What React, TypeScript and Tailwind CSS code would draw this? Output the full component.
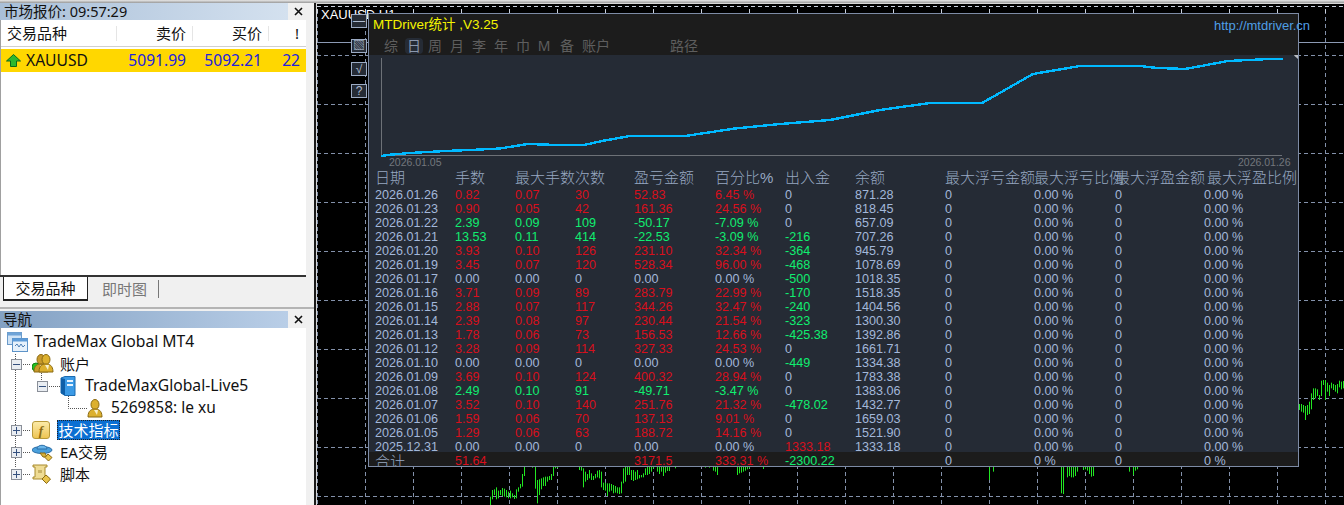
const cjk = "font-['Noto_Sans','Noto_Sans_CJK_SC',sans-serif]";
const arial = "font-['Liberation_Sans','Noto_Sans_CJK_SC',sans-serif]";

const header = ["日期", "手数", "最大手数", "次数", "盈亏金额", "百分比%", "出入金", "余额", "最大浮亏金额", "最大浮亏比例", "最大浮盈金额", "最大浮盈比例"];

const rows = [
  ["2026.01.26", "0.82", "0.07", "30", "52.83", "6.45 %", "0", "871.28"],
  ["2026.01.23", "0.90", "0.05", "42", "161.36", "24.56 %", "0", "818.45"],
  ["2026.01.22", "2.39", "0.09", "109", "-50.17", "-7.09 %", "0", "657.09"],
  ["2026.01.21", "13.53", "0.11", "414", "-22.53", "-3.09 %", "-216", "707.26"],
  ["2026.01.20", "3.93", "0.10", "126", "231.10", "32.34 %", "-364", "945.79"],
  ["2026.01.19", "3.45", "0.07", "120", "528.34", "96.00 %", "-468", "1078.69"],
  ["2026.01.17", "0.00", "0.00", "0", "0.00", "0.00 %", "-500", "1018.35"],
  ["2026.01.16", "3.71", "0.09", "89", "283.79", "22.99 %", "-170", "1518.35"],
  ["2026.01.15", "2.88", "0.07", "117", "344.26", "32.47 %", "-240", "1404.56"],
  ["2026.01.14", "2.39", "0.08", "97", "230.44", "21.54 %", "-323", "1300.30"],
  ["2026.01.13", "1.78", "0.06", "73", "156.53", "12.66 %", "-425.38", "1392.86"],
  ["2026.01.12", "3.28", "0.09", "114", "327.33", "24.53 %", "0", "1661.71"],
  ["2026.01.10", "0.00", "0.00", "0", "0.00", "0.00 %", "-449", "1334.38"],
  ["2026.01.09", "3.69", "0.10", "124", "400.32", "28.94 %", "0", "1783.38"],
  ["2026.01.08", "2.49", "0.10", "91", "-49.71", "-3.47 %", "0", "1383.06"],
  ["2026.01.07", "3.52", "0.10", "140", "251.76", "21.32 %", "-478.02", "1432.77"],
  ["2026.01.06", "1.59", "0.06", "70", "137.13", "9.01 %", "0", "1659.03"],
  ["2026.01.05", "1.29", "0.06", "63", "188.72", "14.16 %", "0", "1521.90"],
  ["2025.12.31", "0.00", "0.00", "0", "0.00", "0.00 %", "1333.18", "1333.18"],
];

const gridCols = "grid grid-cols-[80px_60px_60px_59px_81px_70px_70px_90px_89px_81px_89px_94px]";

function tone(value: string) {
  if (value.startsWith("-")) return "text-[#10ee70]";
  if (parseFloat(value) === 0) return "text-[#a3b8da]";
  return "text-[#d80f1c]";
}

// equity curve of the stats panel, in page coordinates
const curve = [
  [381, 156], [390, 154.7], [410, 153], [445, 151], [470, 150], [500, 148.5], [528, 144], [557, 145], [584, 145],
  [602, 141], [630, 136], [685, 136], [735, 128.5], [780, 124], [830, 120], [880, 110], [930, 103], [982, 103],
  [1033, 74], [1080, 66], [1140, 66], [1157, 68], [1173, 68.5], [1185, 69], [1228, 61], [1270, 59], [1283, 58.7],
];

// green bars behind the panel: x, top, bottom read off the chart
const barsA = [
  [30, 290, 315], [36, 270, 298], [42, 268, 285], [48, 262, 298], [54, 272, 295], [60, 270, 285], [66, 264, 288], [72, 266, 290], [78, 270, 292],
  [84, 275, 295], [90, 272, 295], [96, 280, 292], [102, 285, 297], [108, 268, 295], [114, 262, 275], [120, 252, 265], [126, 222, 260], [132, 199, 228],
  [155, 199, 203], [165, 199, 266], [172, 240, 310], [178, 238, 285], [184, 235, 268], [190, 232, 258], [196, 230, 258], [202, 230, 245], [208, 228, 240],
  [214, 222, 240], [220, 199, 228], [226, 199, 205], [232, 199, 204], [298, 199, 210], [304, 199, 212], [310, 205, 262], [316, 215, 245], [322, 222, 240],
  [328, 210, 235], [334, 220, 240], [340, 228, 240], [346, 222, 235], [352, 212, 232], [358, 210, 235], [364, 215, 262], [370, 248, 270], [376, 248, 272],
  [382, 250, 288], [388, 250, 275], [394, 252, 272], [400, 255, 280], [406, 258, 278], [412, 262, 280], [418, 262, 282], [424, 245, 280], [430, 205, 250],
  [436, 199, 245], [442, 199, 225], [448, 199, 225], [454, 210, 240], [460, 210, 243], [466, 215, 240], [472, 210, 238], [478, 225, 235], [484, 225, 232],
  [490, 220, 232], [496, 205, 225], [502, 199, 225], [508, 199, 222], [514, 199, 215], [520, 199, 206], [532, 199, 215], [538, 199, 222], [544, 199, 215],
  [550, 199, 228], [556, 199, 218], [562, 199, 213], [568, 199, 213], [586, 199, 205], [676, 199, 203], [688, 199, 203], [700, 199, 212], [706, 199, 215],
  [712, 199, 225], [772, 199, 225], [778, 199, 220], [784, 199, 218], [790, 199, 215], [796, 199, 212], [802, 199, 208], [808, 199, 205], [850, 199, 207],
];
const barsB = [
  [538, 199, 240], [550, 199, 215], [754, 199, 280], [760, 199, 282], [772, 199, 232], [778, 199, 228], [784, 199, 232], [790, 199, 232], [796, 199, 228],
  [802, 199, 215], [820, 199, 210], [826, 199, 208], [832, 199, 212], [838, 199, 222], [844, 199, 230], [850, 199, 228], [958, 199, 215], [970, 199, 225],
  [976, 199, 212], [982, 199, 208],
];
const barsC = [
  [28, 132, 150], [34, 132, 155], [40, 135, 158], [46, 138, 180], [52, 135, 165], [58, 125, 162], [64, 100, 148], [70, 85, 120], [76, 85, 115], [82, 88, 108],
  [88, 105, 120], [94, 62, 108], [100, 60, 75], [106, 60, 120], [112, 68, 95], [118, 75, 108], [124, 68, 85], [130, 72, 90], [136, 75, 95], [142, 72, 100],
  [148, 62, 82], [154, 65, 88], [160, 63, 85],
];

const vLines = Array.from({ length: 22 }, (_, i) => 317 + 48 * i);
const hLines = [55, 104, 153, 202, 251, 300, 349, 398, 447, 496];

function ChartCanvas() {
  const bars = [
    ...barsA.map(([x, a, b]) => [480 + x / 3, 400 + a / 3, 400 + b / 3]),
    ...barsB.map(([x, a, b]) => [810 + x / 3, 400 + a / 3, 400 + b / 3]),
    ...barsC.map(([x, a, b]) => [1290 + x / 3, 360 + a / 3, 360 + b / 3]),
  ];
  return (
    <svg className="absolute inset-0 h-full w-full" viewBox="316 3 1028 502">
      <rect x="316.5" y="3.5" width="1028" height="510" fill="none" stroke="#d8d8d8" />
      <line x1="317" x2="1344" y1="6.5" y2="6.5" stroke="#c9d0dc" strokeDasharray="4 3" />
      {hLines.map((y) => (
        <line key={y} x1="317" x2="1344" y1={y + 0.5} y2={y + 0.5} stroke="#8391aa" strokeDasharray="4 3" />
      ))}
      {vLines.map((x) => (
        <g key={x}>
          <line x1={x + 0.5} x2={x + 0.5} y1="10" y2="505" stroke="#8391aa" strokeDasharray="4 3" />
          <line x1={x + 0.5} x2={x + 0.5} y1="9" y2="13" stroke="#c9d0dc" />
        </g>
      ))}
      <line x1="317" x2="1344" y1="42.5" y2="42.5" stroke="#8c9ab4" />
      {bars.map(([x, a, b], i) => (
        <line key={i} x1={Math.round(x) + 0.5} x2={Math.round(x) + 0.5} y1={a} y2={b} stroke="#22e622" />
      ))}
    </svg>
  );
}

function StatsPlot() {
  return (
    <svg className="block shrink-0" width="929" height="115" viewBox="369 55 929 115">
      <rect x="369" y="55" width="929" height="115" fill="#252b35" />
      <line x1="381.5" x2="381.5" y1="58" y2="156" stroke="#6d7177" />
      <line x1="381" x2="1282" y1="155.5" y2="155.5" stroke="#6d7177" />
      <polyline points={curve.map((p) => p.join(",")).join(" ")} fill="none" stroke="#00b9ff" strokeWidth="2.4" shapeRendering="crispEdges" />
      <path d="M1294 55.5 L1298 52 V59 Z" fill="#b8bcc2" />
      <text x="389" y="166" fontFamily="Liberation Sans" fontSize="10.5" fill="#73777d">2026.01.05</text>
      <text x="1238" y="166" fontFamily="Liberation Sans" fontSize="10.5" fill="#73777d">2026.01.26</text>
    </svg>
  );
}

function StatsPanel() {
  const tabs = [
    ["综", "w-[20px] ml-[12px]"],
    ["日", "w-[18px] ml-[4px] bg-[#252b35] rounded-sm text-[#8b98ad]"],
    ["周", "w-[18px] ml-[3px]"],
    ["月", "w-[18px] ml-[4px]"],
    ["李", "w-[18px] ml-[4px]"],
    ["年", "w-[18px] ml-[4px]"],
    ["巾", "w-[18px] ml-[4px]"],
    ["M", "w-[18px] ml-[3px]"],
    ["备", "w-[18px] ml-[5px]"],
    ["账户", "w-[30px] ml-[5px]"],
    ["路径", "w-[30px] ml-[58px]"],
  ];
  return (
    <div className="absolute left-[52px] top-[10px] flex h-[454px] w-[931px] flex-col border border-[#7d8ba5] bg-[#252b35]">
      <div className="relative h-[41px] shrink-0 bg-[#1c1c1c]">
        <div className={`${arial} pl-[4px] pt-[2px] text-[13.5px] leading-[18px] text-[#f4f400]`}>MTDriver统计 ,V3.25</div>
        <div className={`${arial} absolute left-[845px] top-[4px] whitespace-nowrap text-[13px] leading-[16px] text-[#4f9fe6]`}>http://mtdriver.cn</div>
        <div className={`${cjk} mt-[4px] flex text-[14px] leading-[16px] text-[#5e5e5e]`}>
          {tabs.map(([label, cls]) => (
            <span key={label} className={`${cls} shrink-0 whitespace-nowrap text-center`}>
              {label}
            </span>
          ))}
        </div>
      </div>
      <StatsPlot />
      <div className={`${arial} min-h-0 flex-1 overflow-hidden text-[12.6px] text-[#a3b8da]`}>
        <div className={`${gridCols} h-[18px] whitespace-nowrap pl-[6px] text-[15px] font-light leading-[16px]`}>
          {header.map((h, i) => (
            <div key={h} className={`min-w-0 text-[#97a8c2] ${i === 11 ? "pl-[3px]" : ""}`}>
              {h}
            </div>
          ))}
        </div>
        {rows.map((row) => (
          <div key={row[0]} className={`${gridCols} h-[14px] pl-[6px] leading-[14px]`}>
            <div>{row[0]}</div>
            {row.slice(1, 6).map((cell, i) => (
              <div key={i} className={tone(row[4].startsWith("-") || parseFloat(row[4]) === 0 ? row[4] : "1")}>
                {cell}
              </div>
            ))}
            <div className={tone(row[6])}>{row[6]}</div>
            <div>{row[7]}</div>
            <div>0</div>
            <div>0.00 %</div>
            <div>0</div>
            <div>0.00 %</div>
          </div>
        ))}
        <div className={`${gridCols} relative -mt-[2px] h-[16px] bg-[#1c1c1c] pl-[6px] pt-[2px] leading-[15px]`}>
          <div className={`${cjk} text-[15px] font-light leading-[15px] text-[#97a8c2]`}>合计</div>
          <div className="text-[#d80f1c]">51.64</div>
          <div />
          <div />
          <div className="text-[#d80f1c]">3171.5</div>
          <div className="whitespace-nowrap text-[#d80f1c]">333.31 %</div>
          <div className="text-[#10ee70]">-2300.22</div>
          <div />
          <div>0</div>
          <div>0 %</div>
          <div>0</div>
          <div>0 %</div>
        </div>
      </div>
    </div>
  );
}

function SideButton({ label }: { label: string }) {
  return (
    <div className={`${arial} flex h-[14px] w-[16px] items-center justify-center border border-[#9cabc4] bg-[#252b35] text-[12px] leading-none text-[#aebbd0]`}>
      {label}
    </div>
  );
}

function CloseX() {
  return (
    <svg width="9" height="9" viewBox="0 0 9 9" className="shrink-0">
      <path d="M1 1 L8 8 M8 1 L1 8" stroke="#111" strokeWidth="1.6" />
    </svg>
  );
}

function UpArrow() {
  return (
    <svg width="15" height="13" viewBox="0 0 15 13">
      <path d="M7.5 0.5 L14.5 7 H10.5 V12.5 H4.5 V7 H0.5 Z" fill="#2eb82e" stroke="#0f6a1a" />
    </svg>
  );
}

function TerminalIcon() {
  return (
    <svg width="21" height="20" viewBox="0 0 21 20">
      <rect x="0.5" y="0.5" width="14" height="12" fill="#cfe3f6" stroke="#6b9ac9" />
      <rect x="0.5" y="0.5" width="14" height="3" fill="#6fa4d8" />
      <rect x="5.5" y="6.5" width="15" height="13" fill="#e6f1fb" stroke="#5d93c8" />
      <rect x="5.5" y="6.5" width="15" height="3" fill="#5d9bd8" />
      <path d="M8 14 l2 -2 l2 3 l2 -3 l2 3 l2 -2" fill="none" stroke="#4c7fb5" />
    </svg>
  );
}

function Person({ x = 0, color = "#dcb02e" }: { x?: number; color?: string }) {
  return (
    <g transform={`translate(${x} 0)`}>
      <ellipse cx="8" cy="5.5" rx="4" ry="5" fill={color} stroke="#8a6a12" />
      <path d="M1 18 C1 11 5 10 8 10 C11 10 15 11 15 18 Z" fill={color} stroke="#8a6a12" />
      <path d="M7 11 L10 16 L11 11 Z" fill="#f7f0cc" />
    </g>
  );
}

function AccountsIcon() {
  return (
    <svg width="22" height="20" viewBox="0 0 22 20">
      <circle cx="4" cy="13" r="4" fill="#22c122" stroke="#128012" />
      <Person x={1} color="#c99a2c" />
      <Person x={6} />
    </svg>
  );
}

function ServerIcon() {
  return (
    <svg width="16" height="20" viewBox="0 0 16 20">
      <path d="M1 2 L5 0.5 H15 V19.5 H5 L1 17 Z" fill="#3b9ae6" stroke="#1b6bb0" />
      <path d="M1 2 L5 3 V19.5 L1 17 Z" fill="#0f5fa8" />
      <rect x="7" y="4" width="6" height="2" fill="#e8f4ff" />
      <rect x="7" y="8" width="6" height="2" fill="#e8f4ff" />
    </svg>
  );
}

function FunctionIcon() {
  return (
    <div className="flex h-[18px] w-[18px] items-center justify-center rounded-[3px] border border-[#b89a3a] bg-gradient-to-b from-[#fbeaa6] to-[#eec552] font-['Liberation_Serif',serif] text-[13px] font-bold italic leading-none text-[#8a6a12]">
      f
    </div>
  );
}

function HatIcon() {
  return (
    <svg width="22" height="19" viewBox="0 0 22 19">
      <ellipse cx="10" cy="7" rx="10" ry="3.5" fill="#4aa0dc" stroke="#2a6ea8" />
      <path d="M5 6 C5 1 15 1 15 6 Z" fill="#6ab6ea" stroke="#2a6ea8" />
      <path d="M8 10 L13 10 L15 14 L11 14 Z" fill="#d8b23a" stroke="#8a6a12" />
      <path d="M16 11 L20 14.5 L16.5 18 L13 14.5 Z" fill="#e9c44c" stroke="#8a6a12" />
    </svg>
  );
}

function ScrollIcon() {
  return (
    <svg width="20" height="20" viewBox="0 0 20 20">
      <path d="M1 1 H15 V3 H13 V13 H15 V15 H1 V13 H3 V3 H1 Z" fill="#efdc94" stroke="#a88a2c" />
      <rect x="6" y="6" width="4" height="3" fill="#c9b266" />
      <path d="M14 11 L18.5 15 L14.5 19.5 L10 15 Z" fill="#e9c44c" stroke="#8a6a12" />
    </svg>
  );
}

function Toggle({ open }: { open: boolean }) {
  return (
    <svg width="11" height="11" viewBox="0 0 11 11" className="shrink-0">
      <rect x="0.5" y="0.5" width="10" height="10" fill="#e9edf2" stroke="#8a8f98" />
      <line x1="2" x2="9" y1="5.5" y2="5.5" stroke="#34507e" />
      {!open && <line x1="5.5" x2="5.5" y1="2" y2="9" stroke="#34507e" />}
    </svg>
  );
}

function TreeLines() {
  return (
    <svg className="absolute -left-px top-0" width="120" height="160" viewBox="0 328 120 160">
      <g stroke="#555" strokeDasharray="1 1" fill="none">
        <path d="M15.5 354 V468" />
        <path d="M21 364.5 H31 M21 430.5 H31 M21 452.5 H31 M21 474.5 H31" />
        <path d="M41.5 373 V381 M47 386.5 H60" />
        <path d="M68.5 396 V408.5 H87" />
      </g>
    </svg>
  );
}

function TreeRow({ children, pad }: { children: React.ReactNode; pad: string }) {
  return <div className={`flex h-[22px] items-center ${pad}`}>{children}</div>;
}

function LeftPanel() {
  return (
    <div className={`${cjk} flex h-full w-[316px] shrink-0 flex-col border-r-2 border-[#1a1a1a] bg-[#f0f0f0] text-[15px] text-[#111]`}>
      <div className="flex h-[17px] shrink-0 items-center pr-[3px]">
        <div className="flex h-full w-[288px] items-center bg-gradient-to-r from-[#a9bfd8] to-[#d4e1ef] pl-[4px] text-[14.5px] leading-none">市场报价: 09:57:29</div>
        <div className="flex flex-1 justify-center pr-[3px]">
          <CloseX />
        </div>
      </div>
      <div className="mr-[8px] flex h-[255px] shrink-0 flex-col border-l border-[#a0a0a0] bg-white">
        <div className="flex h-[27px] items-center border-b border-[#d0d0d0] leading-none">
          <div className="w-[115px] pl-[6px]">交易品种</div>
          <div className="w-[76px] border-l border-[#e5e5e5] pr-[6px] text-right">卖价</div>
          <div className="w-[76px] border-l border-[#e5e5e5] pr-[6px] text-right">买价</div>
          <div className="w-[38px] border-l border-[#e5e5e5] pr-[7px] text-right">!</div>
        </div>
        <div className="mt-[2px] flex h-[23px] items-center bg-[#ffd700] text-[15.6px] leading-none">
          <div className="flex w-[115px] items-center gap-[5px] pl-[5px]">
            <UpArrow />
            <span>XAUUSD</span>
          </div>
          <div className="w-[76px] pr-[6px] text-right text-[#2222dd]">5091.99</div>
          <div className="w-[76px] pr-[6px] text-right text-[#2222dd]">5092.21</div>
          <div className="w-[38px] pr-[6px] text-right text-[#2222dd]">22</div>
        </div>
      </div>
      <div className="mr-[8px] h-[26px] shrink-0 border-t-2 border-[#333]">
        <div className="flex h-full items-stretch pl-[3px]">
          <div className="flex w-[85px] items-center justify-center border-x border-b-2 border-[#222] bg-white leading-none">交易品种</div>
          <div className="ml-[14px] flex items-center leading-none text-[#777]">即时图</div>
          <div className="my-[3px] ml-[11px] w-px bg-[#777]" />
        </div>
      </div>
      <div className="mt-[6px] h-[2px] shrink-0 bg-[#b4b4b4]" />
      <div className="mt-[2px] flex h-[17px] shrink-0 items-center pr-[3px]">
        <div className="flex h-full w-[288px] items-center bg-gradient-to-r from-[#83a1c3] to-[#b9cee7] pl-[3px] text-[14.5px] leading-none">导航</div>
        <div className="flex flex-1 justify-center pr-[3px]">
          <CloseX />
        </div>
      </div>
      <div className="relative mr-[8px] min-h-0 flex-1 border-l border-[#a0a0a0] bg-white pt-[3px] leading-none">
        <TreeLines />
        <div className="relative">
          <TreeRow pad="pl-[6px] gap-[6px]">
            <TerminalIcon />
            <span className="text-[15.7px]">TradeMax Global MT4</span>
          </TreeRow>
          <TreeRow pad="pl-[10px]">
            <Toggle open />
            <span className="ml-[10px]">
              <AccountsIcon />
            </span>
            <span className="ml-[6px]">账户</span>
          </TreeRow>
          <TreeRow pad="pl-[36px]">
            <Toggle open />
            <span className="ml-[12px]">
              <ServerIcon />
            </span>
            <span className="ml-[9px] text-[15.7px]">TradeMaxGlobal-Live5</span>
          </TreeRow>
          <TreeRow pad="pl-[86px]">
            <svg width="16" height="19" viewBox="0 0 16 19">
              <Person />
            </svg>
            <span className="ml-[8px] text-[15.5px]">5269858: le xu</span>
          </TreeRow>
          <TreeRow pad="pl-[10px]">
            <Toggle open={false} />
            <span className="ml-[10px]">
              <FunctionIcon />
            </span>
            <span className="ml-[7px] flex h-[20px] w-[63px] items-center justify-center border border-dotted border-[#222] bg-[#0b6fd2] text-white">技术指标</span>
          </TreeRow>
          <TreeRow pad="pl-[10px]">
            <Toggle open={false} />
            <span className="ml-[10px]">
              <HatIcon />
            </span>
            <span className="ml-[6px]">EA交易</span>
          </TreeRow>
          <TreeRow pad="pl-[10px]">
            <Toggle open={false} />
            <span className="ml-[10px]">
              <ScrollIcon />
            </span>
            <span className="ml-[8px]">脚本</span>
          </TreeRow>
        </div>
      </div>
    </div>
  );
}

export default function App() {
  return (
    <div className="flex h-[505px] w-[1344px] flex-col overflow-hidden bg-[#f0f0f0]">
      <div className="h-[3px] shrink-0 bg-gradient-to-b from-[#e8e8e8] to-[#9a9a9a]" />
      <div className="flex min-h-0 flex-1">
        <LeftPanel />
        <div className="relative flex-1 overflow-hidden bg-black">
          <ChartCanvas />
          <div className={`${arial} absolute left-[5px] top-[5px] whitespace-nowrap text-[13px] leading-[14px] text-white`}>XAUUSD,H1</div>
          <div className="absolute left-[35px] top-[11px] flex flex-col">
            <SideButton label="—" />
            <div className="mt-[11px]">
              <SideButton label="▧" />
            </div>
            <div className="mt-[9px]">
              <SideButton label="√" />
            </div>
            <div className="mt-[8px]">
              <SideButton label="?" />
            </div>
          </div>
          <StatsPanel />
        </div>
      </div>
    </div>
  );
}
